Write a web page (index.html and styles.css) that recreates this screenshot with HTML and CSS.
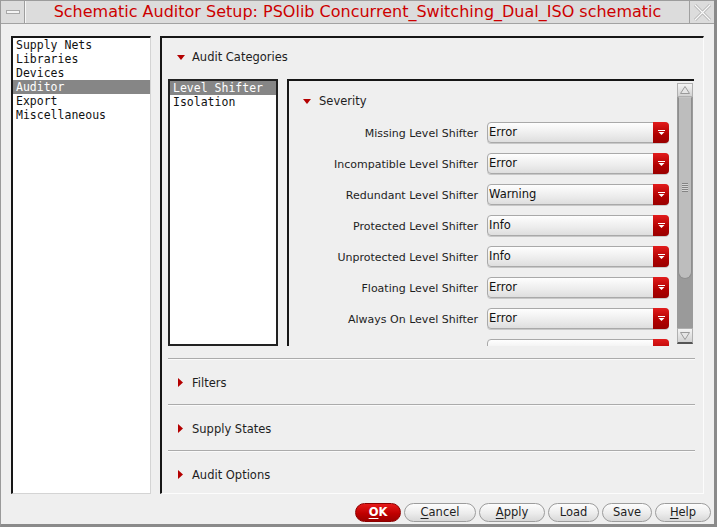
FILE: index.html
```html
<!DOCTYPE html>
<html>
<head>
<meta charset="utf-8">
<link rel="stylesheet" href="styles.css">
</head>
<body>
<div class="window">
  <div class="titlebar">
    <div class="tb-btn tb-menu"><span class="minus"></span></div>
    <div class="title">Schematic Auditor Setup: PSOlib Concurrent_Switching_Dual_ISO schematic</div>
    <div class="tb-btn tb-close">
      <svg width="19" height="19" viewBox="0 0 19 19"><path d="M2 2 L17 17 M17 2 L2 17" stroke="#b4b4b4" stroke-width="3" fill="none"/><path d="M2 2 L17 17 M17 2 L2 17" stroke="#fafafa" stroke-width="1.2" fill="none"/></svg>
    </div>
  </div>

  <div class="main">
    <ul class="navlist">
      <li>Supply Nets</li>
      <li>Libraries</li>
      <li>Devices</li>
      <li class="sel">Auditor</li>
      <li>Export</li>
      <li>Miscellaneous</li>
    </ul>

    <div class="panel">
      <div class="sec-head top-head">
        <svg class="tri-down" width="8" height="5" viewBox="0 0 8 5"><path d="M0 0 H8 L4 5 Z" fill="#b40000"/></svg>
        <span>Audit Categories</span>
      </div>
      <div class="cat-area">
        <ul class="catlist">
          <li class="sel">Level Shifter</li>
          <li>Isolation</li>
        </ul>
        <div class="sev-frame">
          <div class="sev-content">
            <div class="sec-head sev-head">
              <svg class="tri-down" width="8" height="5" viewBox="0 0 8 5"><path d="M0 0 H8 L4 5 Z" fill="#b40000"/></svg>
              <span>Severity</span>
            </div>
            <div class="sev-grid">
              <div class="lbl">Missing Level Shifter</div><div class="combo"><span>Error</span><i class="arrow"><svg width="7" height="5" viewBox="0 0 7 5"><path d="M0 0.5 H7" stroke="#fff" stroke-width="1"/><path d="M0.5 2 H6.5 L3.5 5 Z" fill="#fff"/></svg></i></div>
              <div class="lbl">Incompatible Level Shifter</div><div class="combo"><span>Error</span><i class="arrow"><svg width="7" height="5" viewBox="0 0 7 5"><path d="M0 0.5 H7" stroke="#fff" stroke-width="1"/><path d="M0.5 2 H6.5 L3.5 5 Z" fill="#fff"/></svg></i></div>
              <div class="lbl">Redundant Level Shifter</div><div class="combo"><span>Warning</span><i class="arrow"><svg width="7" height="5" viewBox="0 0 7 5"><path d="M0 0.5 H7" stroke="#fff" stroke-width="1"/><path d="M0.5 2 H6.5 L3.5 5 Z" fill="#fff"/></svg></i></div>
              <div class="lbl">Protected Level Shifter</div><div class="combo"><span>Info</span><i class="arrow"><svg width="7" height="5" viewBox="0 0 7 5"><path d="M0 0.5 H7" stroke="#fff" stroke-width="1"/><path d="M0.5 2 H6.5 L3.5 5 Z" fill="#fff"/></svg></i></div>
              <div class="lbl">Unprotected Level Shifter</div><div class="combo"><span>Info</span><i class="arrow"><svg width="7" height="5" viewBox="0 0 7 5"><path d="M0 0.5 H7" stroke="#fff" stroke-width="1"/><path d="M0.5 2 H6.5 L3.5 5 Z" fill="#fff"/></svg></i></div>
              <div class="lbl">Floating Level Shifter</div><div class="combo"><span>Error</span><i class="arrow"><svg width="7" height="5" viewBox="0 0 7 5"><path d="M0 0.5 H7" stroke="#fff" stroke-width="1"/><path d="M0.5 2 H6.5 L3.5 5 Z" fill="#fff"/></svg></i></div>
              <div class="lbl">Always On Level Shifter</div><div class="combo"><span>Error</span><i class="arrow"><svg width="7" height="5" viewBox="0 0 7 5"><path d="M0 0.5 H7" stroke="#fff" stroke-width="1"/><path d="M0.5 2 H6.5 L3.5 5 Z" fill="#fff"/></svg></i></div>
              <div class="lbl"></div><div class="combo"><span></span><i class="arrow"></i></div>
            </div>
          </div>
          <div class="scrollbar">
            <div class="sb-btn"><svg width="10" height="8" viewBox="0 0 10 8"><path d="M5 0.5 L9.5 7.5 H0.5 Z" fill="#e6e6e6" stroke="#9a9a9a" stroke-width="1"/></svg></div>
            <div class="sb-track">
              <div class="sb-thumb"><span class="grip"></span></div>
            </div>
            <div class="sb-btn sb-down"><svg width="10" height="8" viewBox="0 0 10 8"><path d="M0.5 0.5 H9.5 L5 7.5 Z" fill="#e6e6e6" stroke="#9a9a9a" stroke-width="1"/></svg></div>
          </div>
        </div>
      </div>

      <div class="section">
        <svg class="tri-right" width="5" height="9" viewBox="0 0 5 9"><path d="M0 0 L5 4.5 L0 9 Z" fill="#b40000"/></svg>
        <span>Filters</span>
      </div>
      <div class="section">
        <svg class="tri-right" width="5" height="9" viewBox="0 0 5 9"><path d="M0 0 L5 4.5 L0 9 Z" fill="#b40000"/></svg>
        <span>Supply States</span>
      </div>
      <div class="section">
        <svg class="tri-right" width="5" height="9" viewBox="0 0 5 9"><path d="M0 0 L5 4.5 L0 9 Z" fill="#b40000"/></svg>
        <span>Audit Options</span>
      </div>
    </div>
  </div>

  <div class="buttons">
    <button class="btn btn-ok"><u>O</u>K</button>
    <button class="btn btn-cancel"><u>C</u>ancel</button>
    <button class="btn btn-apply"><u>A</u>pply</button>
    <button class="btn btn-load">Load</button>
    <button class="btn btn-save">Save</button>
    <button class="btn btn-help"><u>H</u>elp</button>
  </div>
</div>
</body>
</html>
```

FILE: styles.css
```css
* { box-sizing: border-box; }
html, body { margin: 0; padding: 0; }
body {
  width: 717px;
  height: 527px;
  overflow: hidden;
  background: #efefef;
  font-family: "DejaVu Sans", sans-serif;
  font-size: 11px;
  color: #1e1e1e;
}
ul { list-style: none; margin: 0; padding: 0; }

.window {
  width: 717px;
  height: 527px;
  display: flex;
  flex-direction: column;
  border-left: 1px solid #9a9a9a;
  border-right: 3px solid #8a8a8a;
  border-bottom: 3px solid #8a8a8a;
  background: #efefef;
}

/* title bar */
.titlebar {
  height: 24px;
  flex: none;
  display: flex;
  align-items: stretch;
  background: #dcdcdc;
  border-top: 1px solid #9c9c9c;
  border-bottom: 1px solid #a2a2a2;
}
.tb-btn {
  width: 24px;
  flex: none;
  display: flex;
  align-items: center;
  justify-content: center;
}
.tb-menu {
  border-right: 1px solid #9e9e9e;
  box-shadow: 1px 0 0 #f6f6f6;
}
.tb-menu .minus {
  display: block;
  width: 14px;
  height: 4px;
  background: #f4f4f4;
  border: 1px solid #a8a8a8;
}
.tb-close {
  width: 25px;
  border-left: 1px solid #a0a0a0;
}
.title {
  flex: 1;
  text-align: center;
  color: #cc0000;
  font-size: 16px;
  line-height: 22px;
  white-space: nowrap;
  padding-left: 1px;
}

/* main area */
.main {
  flex: none;
  height: 458px;
  margin-top: 12px;
  display: flex;
  gap: 9px;
  padding: 0 10px 0 10px;
}
.navlist {
  width: 140px;
  flex: none;
  background: #fff;
  border-top: 2px solid #161616;
  border-left: 2px solid #161616;
  border-right: 1px solid #d4d4d4;
  border-bottom: 1px solid #d4d4d4;
}
.navlist li, .catlist li {
  font-family: "DejaVu Sans Mono", monospace;
  font-size: 11.5px;
  line-height: 14px;
  height: 14px;
  padding-left: 3px;
  color: #111;
  white-space: nowrap;
}
.navlist li.sel, .catlist li.sel {
  background: #868686;
  color: #fff;
}

.panel {
  flex: 1;
  display: flex;
  flex-direction: column;
  border-top: 2px solid #161616;
  border-left: 2px solid #161616;
  border-right: 1px solid #fcfcfc;
  border-bottom: 1px solid #fcfcfc;
  overflow: hidden;
}

.sec-head {
  display: flex;
  align-items: center;
  height: 20px;
  line-height: 20px;
  font-size: 11.5px;
}
.top-head {
  margin-top: 9px;
  padding-left: 15px;
}
.top-head .tri-down { margin-right: 7px; }

.cat-area {
  display: flex;
  height: 267px;
  margin-top: 12px;
  margin-left: 6px;
  gap: 9px;
}
.catlist {
  width: 110px;
  flex: none;
  background: #fff;
  border: 2px solid #222;
}
.sev-frame {
  width: 407px;
  flex: none;
  display: flex;
  border-top: 2px solid #161616;
  border-left: 2px solid #161616;
}
.sev-content {
  flex: 1;
  overflow: hidden;
}
.sev-head {
  margin-top: 10px;
  padding-left: 14px;
}
.sev-head .tri-down { margin-right: 8px; }

.sev-grid {
  display: grid;
  grid-template-columns: 189px 182px;
  column-gap: 9px;
  row-gap: 10px;
  grid-auto-rows: 21px;
  margin-top: 11px;
}
.lbl {
  text-align: right;
  line-height: 21px;
  white-space: nowrap;
  padding-top: 1px;
}
.combo {
  display: flex;
  align-items: stretch;
  border: 1px solid #a9a9a9;
  border-radius: 4px;
  background: linear-gradient(#fefefe, #ececec 60%, #dedede);
  box-shadow: 0 1px 0 #c8c8c8;
}
.combo span {
  flex: 1;
  padding-left: 1px;
  line-height: 19px;
  font-size: 11.5px;
  color: #111;
}
.combo .arrow {
  width: 16px;
  flex: none;
  margin: -1px -1px -1px 0;
  background: linear-gradient(#e21c1c, #b00000 60%, #9a0000);
  border-radius: 0 4px 4px 0;
  display: flex;
  align-items: center;
  justify-content: center;
}
.combo .arrow svg { margin-top: -1px; }

.scrollbar {
  width: 16px;
  flex: none;
  margin-top: 2px;
  margin-right: 1px;
  height: 261px;
  display: flex;
  flex-direction: column;
  background: #9a9a9a;
}
.sb-btn {
  height: 14px;
  flex: none;
  background: linear-gradient(#f4f4f4, #d2d2d2);
  border: 1px solid #b0b0b0;
  display: flex;
  align-items: center;
  justify-content: center;
}
.sb-down {
  border-bottom: 2px solid #555;
  height: 16px;
}
.sb-track {
  flex: 1;
  padding: 0 1px;
}
.sb-thumb {
  height: 182px;
  background: #bdbdbd;
  border: 1px solid #8e8e8e;
  border-top-color: #c4c4c4;
  border-radius: 0 0 7px 7px;
  position: relative;
}
.sb-thumb .grip {
  position: absolute;
  left: 3px;
  top: 85px;
  width: 6px;
  height: 9px;
  background: repeating-linear-gradient(#848484 0 1px, #d6d6d6 1px 2px);
}

.section {
  flex: none;
  height: 46px;
  margin: 0 8px 0 6px;
  border-top: 1px solid #ababab;
  box-shadow: inset 0 1px 0 #fafafa;
  display: flex;
  align-items: center;
  padding-left: 10px;
  padding-top: 2px;
  font-size: 11.5px;
}
.cat-area + .section { margin-top: 12px; }
.section .tri-right { margin-right: 9px; }

/* buttons */
.buttons {
  flex: none;
  display: flex;
  justify-content: flex-end;
  gap: 3px;
  padding-right: 3px;
  margin-top: 9px;
}
.btn {
  height: 19px;
  padding: 0;
  border: 1px solid #9c9c9c;
  border-radius: 10px;
  background: linear-gradient(#fdfdfd, #ececec 55%, #d8d8d8);
  font-family: "DejaVu Sans", sans-serif;
  font-size: 11.5px;
  color: #1e1e1e;
  line-height: 17px;
}
.btn u { text-decoration-thickness: 1px; text-underline-offset: 2px; }
.btn-ok {
  width: 46px;
  background: linear-gradient(#e61a1a, #c00000 55%, #9c0000);
  border-color: #8c0000;
  color: #fff;
  font-weight: bold;
}
.btn-cancel { width: 72px; }
.btn-apply { width: 66px; }
.btn-load { width: 51px; }
.btn-save { width: 50px; }
.btn-help { width: 56px; }
```
